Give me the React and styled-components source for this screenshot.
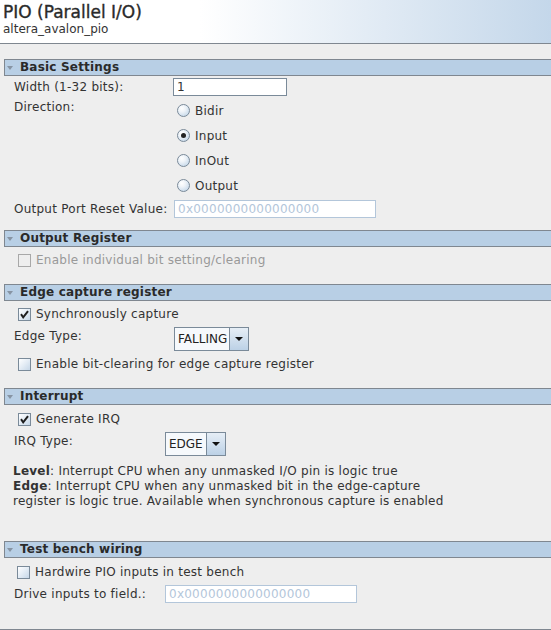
import React from 'react'
import styled, { createGlobalStyle } from 'styled-components'

const GlobalStyle = createGlobalStyle`
  html, body {
    margin: 0;
    padding: 0;
    background: #eeeeee;
  }
  body {
    font-family: "DejaVu Sans", Verdana, sans-serif;
    font-size: 12px;
    letter-spacing: 0.25px;
    color: #333333;
  }
  * {
    box-sizing: border-box;
  }
`

const App = () => {
  return (
    <Frame>
      <GlobalStyle />
      <Header>
        <Title>PIO (Parallel I/O)</Title>
        <Subtitle>altera_avalon_pio</Subtitle>
      </Header>
      <Body>
        <Section title="Basic Settings" pt={2} gap={2} pb={12}>
          <Field $labelWidth={159}>
            <Label>Width (1-32 bits):</Label>
            <TextInput $width={114}>1</TextInput>
          </Field>
          <Field $labelWidth={159}>
            <Label>Direction:</Label>
            <RadioGroup>
              {['Bidir', 'Input', 'InOut', 'Output'].map((d) => (
                <RadioRow key={d}>
                  <RadioCircle $checked={d === 'Input'} />
                  <span>{d}</span>
                </RadioRow>
              ))}
            </RadioGroup>
          </Field>
          <Field $labelWidth={160}>
            <Label>Output Port Reset Value:</Label>
            <TextInput $width={202} $disabled>0x0000000000000000</TextInput>
          </Field>
        </Section>

        <Section title="Output Register" pt={3} gap={3} pb={14}>
          <Checkbox disabled>Enable individual bit setting/clearing</Checkbox>
        </Section>

        <Section title="Edge capture register" pt={3} gap={3} pb={14}>
          <Checkbox checked>Synchronously capture</Checkbox>
          <Field $labelWidth={160}>
            <Label>Edge Type:</Label>
            <Combo value="FALLING" width={75} />
          </Field>
          <Checkbox>Enable bit-clearing for edge capture register</Checkbox>
        </Section>

        <Section title="Interrupt" pt={4} gap={3} pb={32}>
          <Checkbox checked>Generate IRQ</Checkbox>
          <Field $labelWidth={151}>
            <Label>IRQ Type:</Label>
            <Combo value="EDGE" width={61} />
          </Field>
          <Info>
            <div><b>Level</b>: Interrupt CPU when any unmasked I/O pin is logic true</div>
            <div><b>Edge</b>: Interrupt CPU when any unmasked bit in the edge-capture</div>
            <div>register is logic true. Available when synchronous capture is enabled</div>
          </Info>
        </Section>

        <Section title="Test bench wiring" pt={4} gap={3} pb={0}>
          <Checkbox $shift={-1}>Hardwire PIO inputs in test bench</Checkbox>
          <Field $labelWidth={151}>
            <Label>Drive inputs to field.:</Label>
            <TextInput $width={192} $disabled>0x0000000000000000</TextInput>
          </Field>
        </Section>
      </Body>
    </Frame>
  )
}

export default App

const Section = ({ title, pt, gap, pb, children }) => (
  <div>
    <SectionBar>
      <Caret />
      {title}
    </SectionBar>
    <SectionBody $pt={pt} $gap={gap} $pb={pb}>
      {children}
    </SectionBody>
  </div>
)

const Checkbox = ({ checked, disabled, $shift = 0, children }) => (
  <CheckRow $disabled={disabled} $shift={$shift}>
    <CheckBox $disabled={disabled}>
      {checked && (
        <svg width="11" height="11" viewBox="0 0 11 11">
          <path d="M2.6 6 L4.2 8.4 L8.4 3" fill="none" stroke="#1e1e1e" strokeWidth="2" strokeLinecap="square" />
        </svg>
      )}
    </CheckBox>
    <span>{children}</span>
  </CheckRow>
)

const Combo = ({ value, width }) => (
  <ComboBox $width={width}>
    <ComboValue>{value}</ComboValue>
    <ComboButton>
      <Arrow />
    </ComboButton>
  </ComboBox>
)

const Frame = styled.div`
  width: 551px;
  height: 630px;
  overflow: hidden;
  border-bottom: 1px solid #7f8790;
`

const Header = styled.header`
  height: 44px;
  padding: 2px 3px 0;
  border-bottom: 1px solid #7f8790;
  background: linear-gradient(to right, #ffffff 0, #ffffff 200px, #c4d7ea 100%);
`

const Title = styled.h1`
  margin: 0;
  font-size: 17px;
  font-weight: normal;
  letter-spacing: 0;
  line-height: 20px;
  color: #2a2a2a;
  -webkit-text-stroke: 0.35px #2a2a2a;
`

const Subtitle = styled.div`
  font-size: 12px;
  letter-spacing: 0;
  line-height: 15px;
  color: #333333;
`

const Body = styled.div`
  padding: 15px 0 0 4px;
`

const SectionBar = styled.div`
  height: 17px;
  display: flex;
  align-items: center;
  padding-left: 2px;
  border: 1px solid #7f8790;
  border-right: none;
  background: #b8cfe5;
  font-weight: bold;
  font-size: 12px;
  letter-spacing: 0.2px;
  line-height: 15px;
  color: #2a2a2a;
`

const Caret = styled.span`
  width: 0;
  height: 0;
  margin-right: 7px;
  border-left: 3px solid transparent;
  border-right: 3px solid transparent;
  border-top: 4px solid #8794a3;
`

const SectionBody = styled.div`
  display: flex;
  flex-direction: column;
  gap: ${({ $gap }) => $gap}px;
  padding: ${({ $pt }) => $pt}px 0 ${({ $pb }) => $pb}px 10px;
`

const Field = styled.div`
  display: grid;
  grid-template-columns: ${({ $labelWidth }) => $labelWidth}px auto;
  align-items: start;
`

const Label = styled.div`
  line-height: 18px;
  white-space: nowrap;
`

const TextInput = styled.div`
  width: ${({ $width }) => $width}px;
  height: 18px;
  padding-left: 3px;
  line-height: 16px;
  background: #ffffff;
  border: 1px solid ${({ $disabled }) => ($disabled ? '#b3c6da' : '#7a8a99')};
  color: ${({ $disabled }) => ($disabled ? '#b3c6da' : '#333333')};
`

const RadioGroup = styled.div`
  display: flex;
  flex-direction: column;
`

const RadioRow = styled.div`
  height: 25px;
  display: flex;
  align-items: center;
  gap: 5px;
  padding-left: 4px;
`

const RadioCircle = styled.span`
  width: 13px;
  height: 13px;
  border-radius: 50%;
  border: 1px solid #7a8a99;
  background: radial-gradient(circle at 35% 30%, #ffffff 0, #eef3f8 35%, #b8cfe5 100%);
  display: flex;
  align-items: center;
  justify-content: center;

  &::after {
    content: '';
    display: ${({ $checked }) => ($checked ? 'block' : 'none')};
    width: 5px;
    height: 5px;
    border-radius: 50%;
    background: #222222;
  }
`

const CheckRow = styled.div`
  height: 20px;
  display: flex;
  align-items: center;
  gap: 5px;
  padding-left: ${({ $shift }) => 4 + $shift}px;
  color: ${({ $disabled }) => ($disabled ? '#999999' : '#333333')};
`

const CheckBox = styled.span`
  width: 13px;
  height: 13px;
  display: flex;
  align-items: center;
  justify-content: center;
  border: 1px solid ${({ $disabled }) => ($disabled ? '#a8a8a8' : '#7a8a99')};
  background: ${({ $disabled }) =>
    $disabled ? '#eeeeee' : 'linear-gradient(135deg, #ffffff 0, #e6eef6 45%, #c6d7e8 100%)'};
`

const ComboBox = styled.div`
  width: ${({ $width }) => $width}px;
  height: 24px;
  display: flex;
  border: 1px solid #7a8a99;
  background: #f6f9fc;
`

const ComboValue = styled.span`
  flex: 1;
  padding-left: 3px;
  line-height: 22px;
  letter-spacing: 0;
  color: #222222;
`

const ComboButton = styled.span`
  width: 19px;
  display: flex;
  align-items: center;
  justify-content: center;
  border-left: 1px solid #7a8a99;
  background: linear-gradient(#e6eef6, #bcd1e6);
`

const Arrow = styled.span`
  width: 0;
  height: 0;
  border-left: 4px solid transparent;
  border-right: 4px solid transparent;
  border-top: 4px solid #111111;
`

const Info = styled.div`
  margin: 5px 0 0 -1px;
  line-height: 15px;

  b {
    font-weight: bold;
  }
`
